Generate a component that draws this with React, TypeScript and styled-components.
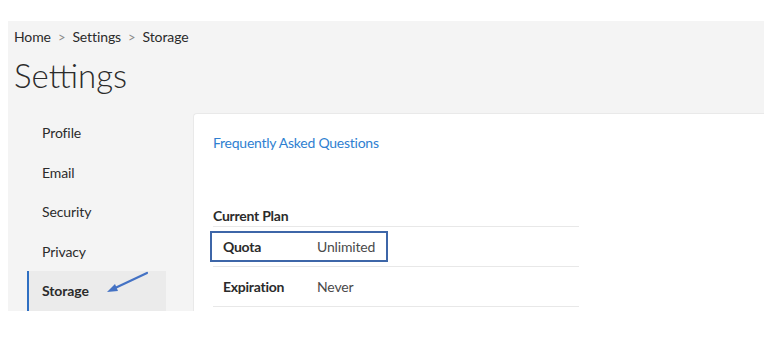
import React from "react";
import styled, { createGlobalStyle } from "styled-components";

const Global = createGlobalStyle`
  html, body { margin: 0; padding: 0; background: #ffffff; }
  body { font-family: Lato, "Open Sans", sans-serif; color: #2b2b2b; }
  * { box-sizing: border-box; }
`;

const Page = styled.div`
  padding: 21px 12px 0 8px;
`;

const Panel = styled.div`
  background: #f4f4f4;
  height: 290px;
  display: flex;
  flex-direction: column;
`;

const Header = styled.div`
  height: 92px;
  padding: 7px 0 0 6px;
  display: flex;
  flex-direction: column;
`;

const Crumbs = styled.div`
  display: flex;
  align-items: center;
  gap: 7px;
  font-size: 14px;
  line-height: 18px;
  letter-spacing: -0.1px;
  color: #2b2b2b;
`;

const Sep = styled.span`
  color: #8a8a8a;
  font-size: 13px;
`;

const Title = styled.h1`
  margin: 9px 0 0 0;
  font-size: 33px;
  line-height: 40px;
  font-weight: 300;
  color: #2b2b2b;
`;

const Body = styled.div`
  flex: 1;
  display: grid;
  grid-template-columns: 185px 1fr;
  min-height: 0;
`;

const Nav = styled.nav`
  padding-left: 19px;
  display: flex;
  flex-direction: column;
`;

const NavItem = styled.div<{ $active?: boolean }>`
  width: 139px;
  height: 39.5px;
  flex: none;
  display: flex;
  align-items: center;
  padding-left: 13px;
  font-size: 14px;
  letter-spacing: -0.1px;
  color: #2b2b2b;
  font-weight: ${(p) => (p.$active ? 700 : 400)};
  background: ${(p) => (p.$active ? "#ebebeb" : "transparent")};
  border-left: 2px solid ${(p) => (p.$active ? "#2f6fc2" : "transparent")};
  position: relative;
`;

const Arrow = styled.svg`
  position: absolute;
  left: 50px;
  top: 0px;
  overflow: visible;
`;

const Card = styled.section`
  background: #ffffff;
  border: 1px solid #e9e9e9;
  border-right: none;
  border-bottom: none;
  border-top-left-radius: 4px;
  padding: 19px 0 0 19px;
  display: flex;
  flex-direction: column;
`;

const Link = styled.a`
  font-size: 14px;
  line-height: 20px;
  letter-spacing: -0.25px;
  color: #2f7fd1;
  text-decoration: none;
`;

const SectionTitle = styled.div`
  margin-top: 53px;
  font-size: 14px;
  font-weight: 700;
  line-height: 20px;
  letter-spacing: -0.25px;
  border-bottom: 1px solid #e8e8e8;
  width: 366px;
  color: #2b2b2b;
`;

const Table = styled.div`
  width: 366px;
  display: flex;
  flex-direction: column;
`;

const Row = styled.div`
  height: 40px;
  display: grid;
  grid-template-columns: 94px 1fr;
  align-items: center;
  padding-left: 10px;
  border-bottom: 1px solid #e8e8e8;
  position: relative;
`;

const Label = styled.div`
  font-size: 14px;
  font-weight: 700;
  letter-spacing: -0.25px;
  color: #2b2b2b;
`;

const Value = styled.div`
  font-size: 14px;
  letter-spacing: -0.15px;
  color: #4a4a4a;
`;

const Highlight = styled.div`
  position: absolute;
  left: -3px;
  top: 4px;
  width: 178px;
  height: 31px;
  border: 2px solid #3d66a8;
  pointer-events: none;
`;

export default function App() {
  return (
    <>
      <Global />
      <Page>
        <Panel>
          <Header>
            <Crumbs>
              <span>Home</span>
              <Sep>&gt;</Sep>
              <span>Settings</span>
              <Sep>&gt;</Sep>
              <span>Storage</span>
            </Crumbs>
            <Title>Settings</Title>
          </Header>
          <Body>
            <Nav>
              <NavItem>Profile</NavItem>
              <NavItem>Email</NavItem>
              <NavItem>Security</NavItem>
              <NavItem>Privacy</NavItem>
              <NavItem $active>
                Storage
                <Arrow width="50" height="30" viewBox="0 0 50 30">
                  <line x1="68" y1="2" x2="34" y2="18" stroke="#4472c4" strokeWidth="2.2" strokeLinecap="round" />
                  <polygon points="28,21 36,13 39,20" fill="#4472c4" />
                </Arrow>
              </NavItem>
            </Nav>
            <Card>
              <Link href="#">Frequently Asked Questions</Link>
              <SectionTitle>Current Plan</SectionTitle>
              <Table>
                <Row>
                  <Label>Quota</Label>
                  <Value>Unlimited</Value>
                  <Highlight />
                </Row>
                <Row>
                  <Label>Expiration</Label>
                  <Value>Never</Value>
                </Row>
              </Table>
            </Card>
          </Body>
        </Panel>
      </Page>
    </>
  );
}
